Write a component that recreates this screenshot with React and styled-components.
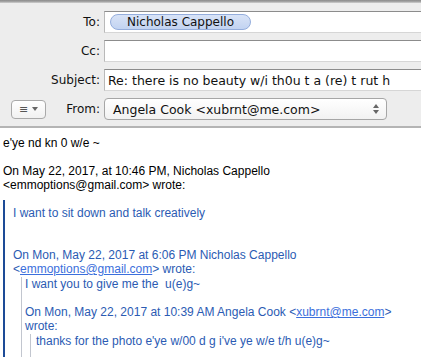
import styled, { createGlobalStyle } from "styled-components";

const GlobalStyle = createGlobalStyle`
  html, body {
    margin: 0;
    padding: 0;
    background: #ffffff;
  }
  body {
    width: 421px;
    height: 357px;
    overflow: hidden;
  }
`;

const App = () => {
  return (
    <Window>
      <GlobalStyle />
      <TopEdge />
      <Header>
        <Row>
          <Label>To:</Label>
          <Field>
            <Token>Nicholas Cappello</Token>
          </Field>
        </Row>
        <Row>
          <Label>Cc:</Label>
          <Field />
        </Row>
        <Row>
          <Label>Subject:</Label>
          <Field>Re: there is no beauty w/i th0u t a (re) t rut h</Field>
        </Row>
        <Row>
          <MenuButton>
            <span>≡</span>
            <Caret />
          </MenuButton>
          <FromLabel>From:</FromLabel>
          <Popup>
            Angela Cook &lt;xubrnt@me.com&gt;
            <Stepper>
              <Caret $up />
              <Caret />
            </Stepper>
          </Popup>
        </Row>
      </Header>
      <Body>
        <Line>e'ye nd kn 0 w/e ~</Line>
        <Line>&nbsp;</Line>
        <Line>On May 22, 2017, at 10:46 PM, Nicholas Cappello</Line>
        <Line>&lt;emmoptions@gmail.com&gt; wrote:</Line>
        <Quote>
          <Line>I want to sit down and talk creatively</Line>
          <Line>&nbsp;</Line>
          <Line>&nbsp;</Line>
          <Line>On Mon, May 22, 2017 at 6:06 PM Nicholas Cappello</Line>
          <Line>
            &lt;<Link>emmoptions@gmail.com</Link>&gt; wrote:
          </Line>
          <Nested>
            <Line>I want you to give me the&nbsp; u(e)g~</Line>
            <Line>&nbsp;</Line>
            <Line>
              On Mon, May 22, 2017 at 10:39 AM Angela Cook &lt;<Link>xubrnt@me.com</Link>&gt;
            </Line>
            <Line>wrote:</Line>
            <Nested $inner>
              <Line>thanks for the photo e'ye w/00 d g i've ye w/e t/h u(e)g~</Line>
              <Line>&nbsp;</Line>
            </Nested>
          </Nested>
        </Quote>
      </Body>
    </Window>
  );
};

const Window = styled.div`
  width: 421px;
  height: 357px;
  overflow: hidden;
  display: flex;
  flex-direction: column;
  background: #ffffff;
`;

const TopEdge = styled.div`
  height: 3px;
  flex: none;
  background: linear-gradient(#8a8a8a, #a8a8a8 60%, #d4d4d4);
`;

const Header = styled.div`
  flex: none;
  background: #ededed;
  padding: 8px 0 6px;
  display: flex;
  flex-direction: column;
  gap: 7px;
  border-bottom: 2px solid #b4b4b4;
  font-family: "DejaVu Sans", "Liberation Sans", sans-serif;
  font-size: 12px;
  color: #111;
`;

const Row = styled.div`
  display: flex;
  align-items: center;
  height: 22px;
`;

const Label = styled.div`
  width: 100px;
  text-align: right;
  margin-right: 4px;
  flex: none;
`;

const Field = styled.div`
  flex: 1;
  margin-right: -20px;
  height: 22px;
  box-sizing: border-box;
  background: #ffffff;
  border: 1px solid #b9b9b9;
  border-top-color: #8c8c8c;
  border-bottom-color: #d6d6d6;
  display: flex;
  align-items: center;
  padding-left: 3px;
  white-space: nowrap;
  font-size: 12.5px;
`;

const Token = styled.span`
  display: inline-flex;
  align-items: center;
  justify-content: center;
  width: 141px;
  height: 16px;
  box-sizing: border-box;
  margin-left: 2px;
  border-radius: 8px;
  border: 1px solid #94addc;
  background: linear-gradient(#d8e3f7, #c2d3f1);
  font-size: 12px;
  white-space: nowrap;
  overflow: hidden;
`;

const MenuButton = styled.div`
  margin-left: 11px;
  width: 35px;
  height: 19px;
  box-sizing: border-box;
  border: 1px solid #a9a9a9;
  border-radius: 4px;
  background: linear-gradient(#ffffff, #f1f1f1);
  display: flex;
  align-items: center;
  justify-content: center;
  gap: 4px;
  color: #555;
  font-size: 11px;
  flex: none;
`;

const FromLabel = styled.div`
  margin-left: 18px;
  width: 36px;
  margin-right: 4px;
  text-align: right;
  flex: none;
`;

const Popup = styled.div`
  width: 283px;
  height: 22px;
  box-sizing: border-box;
  border: 1px solid #a6a6a6;
  border-radius: 4px;
  background: linear-gradient(#ffffff, #f2f2f2);
  display: flex;
  align-items: center;
  padding-left: 8px;
  font-size: 12.5px;
  white-space: nowrap;
  position: relative;
`;

const Stepper = styled.div`
  position: absolute;
  right: 7px;
  top: 5px;
  display: flex;
  flex-direction: column;
  gap: 2px;
`;

const Caret = styled.span`
  display: block;
  width: 0;
  height: 0;
  border-left: 3px solid transparent;
  border-right: 3px solid transparent;
  ${(p) =>
    p.$up
      ? "border-bottom: 4px solid #666;"
      : "border-top: 4px solid #666;"}
`;

const Body = styled.div`
  flex: 1;
  padding: 8px 0 0 3px;
  font-family: "Liberation Sans", Arial, sans-serif;
  font-size: 12px;
  color: #000;
`;

const Line = styled.div`
  line-height: 14px;
  white-space: nowrap;
`;

const Quote = styled.div`
  margin-top: 8px;
  padding: 6px 0 0 8px;
  border-left: 2px solid #1d4b97;
  color: #2b5bb3;
  min-height: 200px;
`;

const Nested = styled.div`
  margin-left: ${(p) => (p.$inner ? "5px" : "8px")};
  margin-top: 1px;
  padding-left: ${(p) => (p.$inner ? "5px" : "3px")};
  border-left: 1px solid #c2c6cf;
  min-height: 80px;
`;

const Link = styled.span`
  color: #3b6fdc;
  text-decoration: underline;
`;

export default App;
